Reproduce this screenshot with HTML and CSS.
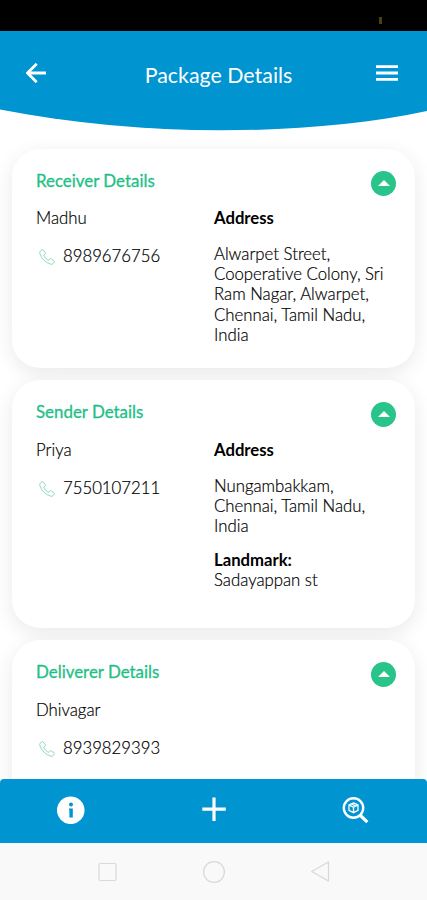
FILE: index.html
```html
<!DOCTYPE html>
<html lang="en">
<head>
  <meta charset="UTF-8" />
  <meta name="viewport" content="width=device-width, initial-scale=1.0"/>
  <title>Package Details</title>
  <link rel="stylesheet" href="styles.css">
</head>
<body>
  <svg class="symbols" width="0" height="0">
    <symbol id="phone" viewBox="0 0 16 16">
      <path d="M1.2 2.2 3 .8c.5-.3 1-.2 1.300.2L6.300 3.800c.3.5.2 1-.2 1.300L5 6c-.3.300-.3.600-.1 1 1 1.700 2.300 3 4 4.200.4.200.7.200 1-.1l.9-1.100c.4-.4.900-.5 1.300-.2l2.900 1.900c.4.300.5.800.2 1.300l-1.300 1.800c-.4.500-.9.600-1.500.5C6.800 14 1.900 9.200.7 3.700c-.1-.6 0-1.100.5-1.500z" fill="none" stroke="currentColor" stroke-width="0.8"/>
    </symbol>
  </svg>

  <div class="status-bar"><span class="status-mark"></span></div>

  <header class="header">
    <div class="header-row">
      <svg class="icon-back" width="20" height="20" viewBox="0 0 20 20">
        <path d="M20 10H2M10.700.8 1.500 10l9.200 9.200" fill="none" stroke="currentColor" stroke-width="2.800"/>
      </svg>
      <h1>Package Details</h1>
      <svg class="icon-menu" width="22" height="16" viewBox="0 0 22 16">
        <path d="M0 1.600h22M0 8h22M0 14.400h22" stroke="currentColor" stroke-width="2.900"/>
      </svg>
    </div>
    <svg class="header-curve" width="427" height="22" viewBox="0 0 427 22" preserveAspectRatio="none">
      <path d="M0 0V.5C70 14 146 21.300 221 21.300S365 15 427 2V0z" fill="currentColor"/>
    </svg>
  </header>

  <main class="content">
    <section class="card">
      <div class="card-head">
        <h2>Receiver Details</h2>
        <button class="toggle"></button>
      </div>
      <div class="card-body">
        <div class="person">
          <p>Madhu</p>
          <p class="phone"><svg width="16" height="16"><use href="#phone"/></svg>8989676756</p>
        </div>
        <div class="address">
          <h3>Address</h3>
          <p>Alwarpet Street,<br>Cooperative Colony, Sri<br>Ram Nagar, Alwarpet,<br>Chennai, Tamil Nadu,<br>India</p>
        </div>
      </div>
    </section>

    <section class="card card-sender">
      <div class="card-head">
        <h2>Sender Details</h2>
        <button class="toggle"></button>
      </div>
      <div class="card-body">
        <div class="person">
          <p>Priya</p>
          <p class="phone"><svg width="16" height="16"><use href="#phone"/></svg>7550107211</p>
        </div>
        <div class="address">
          <h3>Address</h3>
          <p>Nungambakkam,<br>Chennai, Tamil Nadu,<br>India</p>
          <h3 class="landmark">Landmark:</h3>
          <p>Sadayappan st</p>
        </div>
      </div>
    </section>

    <section class="card">
      <div class="card-head">
        <h2>Deliverer Details</h2>
        <button class="toggle"></button>
      </div>
      <div class="card-body">
        <div class="person">
          <p>Dhivagar</p>
          <p class="phone"><svg width="16" height="16"><use href="#phone"/></svg>8939829393</p>
        </div>
      </div>
    </section>
  </main>

  <nav class="tab-bar">
    <svg width="28" height="28" viewBox="0 0 28 28">
      <circle cx="13.700" cy="14.300" r="13.800" fill="#fff"/>
      <circle cx="14" cy="8.500" r="2" fill="#0094d0"/>
      <path d="M12 12.400h3.800v9h-3.400v-7.400H12z" fill="#0094d0"/>
    </svg>
    <svg width="28" height="28" viewBox="0 0 28 28">
      <path d="M14 1.500v23.500M2.300 13.200h23.500" stroke="#fff" stroke-width="3.200"/>
    </svg>
    <svg width="28" height="28" viewBox="0 0 28 28" fill="none" stroke="#fff">
      <circle cx="11.500" cy="12" r="9.700" stroke-width="2.400"/>
      <path d="M17.900 19l7.400 7.200" stroke-width="3.200"/>
      <path d="M11.500 6.900 16 9v5.400l-4.500 2.300L7 14.400V9zM7 9l4.500 2.200L16 9M11.500 11.200V16.700M9.300 7.900l4.500 2.300" stroke-width="1.300"/>
    </svg>
  </nav>

  <div class="system-nav">
    <svg width="22" height="22" viewBox="0 0 22 22"><rect x="3" y="2.500" width="17" height="17" rx="1.500"/></svg>
    <svg width="22" height="22" viewBox="0 0 22 22"><circle cx="11" cy="11" r="10.400"/></svg>
    <svg width="22" height="22" viewBox="0 0 22 22"><path d="M19.500 1v19L2.700 10.500z" stroke-linejoin="round"/></svg>
  </div>
</body>
</html>
```
FILE: styles.css
```css
* {
  box-sizing: border-box;
  margin: 0;
  padding: 0;
}

:root {
  --blue: #0094d0;
  --green: #29c48a;
  --green-text: #1fc087;
}

body {
  height: 900px;
  display: flex;
  flex-direction: column;
  overflow: hidden;
  font-family: Lato, sans-serif;
  font-size: 16.75px;
  font-weight: 300;
  font-variant-ligatures: none;
  line-height: 20px;
  color: #000;
  background: #fff;
}

.symbols {
  position: absolute;
}

.status-bar {
  flex: none;
  height: 31px;
  background: #000;
  display: flex;
  justify-content: flex-end;
  padding: 17px 45px 0 0;
}

.status-mark {
  width: 3px;
  height: 7px;
  background: #4a4405;
}

.header {
  flex: none;
  height: 99px;
  color: var(--blue);
}

.header-row {
  height: 78px;
  padding: 6px 29px 0 26px;
  display: flex;
  align-items: center;
  justify-content: space-between;
  background: var(--blue);
  color: #fff;
}

.header h1 {
  padding: 4px 0 0 15px;
  font-size: 21.4px;
  font-weight: 400;
  line-height: 28px;
}

.icon-back {
  margin-bottom: 1px;
}

.header-curve {
  display: block;
  width: 100%;
}

.content {
  flex: 1;
  min-height: 0;
  padding: 19px 12px 0;
  display: flex;
  flex-direction: column;
  gap: 12px;
  overflow: hidden;
}

.card {
  flex: none;
  height: 219px;
  padding: 21px 19px 0 24px;
  border-radius: 28px;
  background: #fff;
  box-shadow: 0 5px 20px rgba(0, 0, 0, 0.09);
}

.card-sender {
  height: 248px;
}

.card-head {
  display: flex;
  justify-content: space-between;
  height: 38px;
}

.card + .card .card-head {
  height: 39px;
}

.card h2 {
  font-size: 16.9px;
  font-weight: 400;
  line-height: 22px;
  color: var(--green-text);
  -webkit-text-stroke: 0.3px var(--green-text);
}

.card p {
  -webkit-text-stroke: 0.2px #000;
}

.toggle {
  width: 25px;
  height: 25px;
  margin-top: 1px;
  border: none;
  border-radius: 50%;
  background: var(--green);
  display: flex;
  align-items: center;
  justify-content: center;
}

.toggle::before {
  content: "";
  border: 6px solid transparent;
  border-top: none;
  border-bottom: 6px solid #fff;
  margin-bottom: 2px;
}

.card-body {
  display: grid;
  grid-template-columns: 178px 1fr;
}

.phone {
  margin-top: 18px;
  display: flex;
  align-items: center;
}

.phone svg {
  margin: 2px 8px 0 3px;
  color: #71cfa9;
}

.address h3 {
  margin-bottom: 16px;
  font-size: 16.7px;
  font-weight: 700;
  color: #000;
}

.address .landmark {
  margin: 13.5px 0 0;
}

.address p {
  white-space: nowrap;
  line-height: 20.2px;
}

.tab-bar {
  flex: none;
  height: 64px;
  padding: 0 57px 2px;
  display: flex;
  align-items: center;
  justify-content: space-between;
  border-radius: 4px 4px 0 0;
  background: var(--blue);
}

.system-nav {
  flex: none;
  height: 57px;
  padding: 0 96px;
  display: flex;
  align-items: center;
  justify-content: space-between;
  background: #f9f9f9;
}

.system-nav svg {
  fill: none;
  stroke: #d8d8d8;
  stroke-width: 1.2;
}
```
